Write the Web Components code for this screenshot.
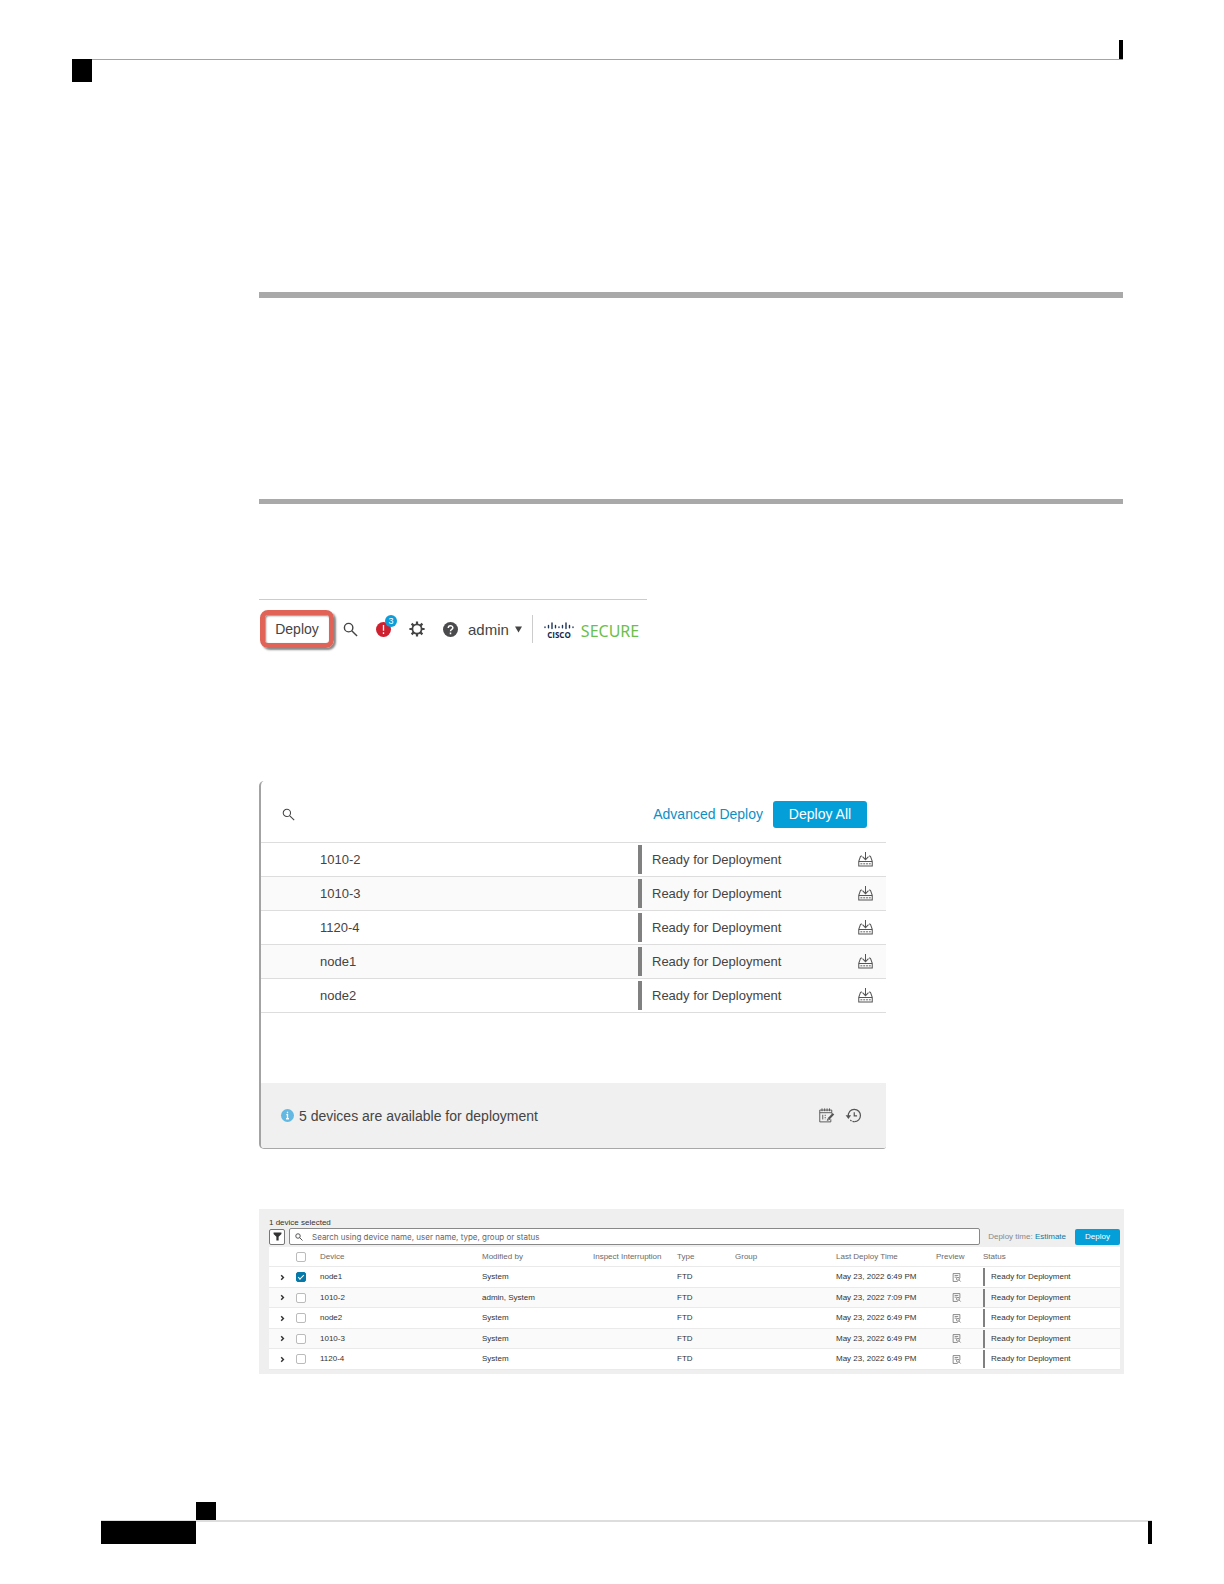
<!DOCTYPE html>
<html lang="en">
<head>
<meta charset="utf-8">
<meta name="viewport" content="width=device-width, initial-scale=1">
<title>Deploy</title>
<style>
  body {
    margin: 0;
    background: #fff;
    color: #444;
    font-family: "Liberation Sans", Arial, sans-serif;
  }
</style>
</head>
<body>
<doc-page>
  <page-head slot="head"></page-head>
  <section-rule></section-rule>
  <section-rule thin></section-rule>
  <deploy-toolbar></deploy-toolbar>
  <deploy-panel></deploy-panel>
  <device-table></device-table>
  <page-foot slot="foot"></page-foot>
</doc-page>

<script>
const ICONS = {
  search: '<circle cx="6" cy="6" r="4.5"/><path d="M9.3 9.3 15 15"/>',
  gear: '<circle cx="8" cy="8" r="4.6" stroke-width="1.8"/><path stroke-width="2.2" d="M8 .4v2.8M8 12.8v2.8M.4 8h2.8M12.8 8h2.8M2.6 2.6l2 2M11.4 11.4l2 2M2.6 13.4l2-2M11.4 4.6l2-2"/>',
  alert: '<circle cx="8" cy="8" r="8" fill="#cf2030" stroke="none"/><path stroke="#fff" stroke-width="1.4" d="M8 3.2v6M8 11v1.8"/>',
  help: '<circle cx="8" cy="8" r="8" fill="#4b4b4d" stroke="none"/><path stroke="#fff" stroke-width="1.6" d="M5.6 6.3C5.6 3.3 10.5 3.3 10.5 6.1 10.5 8 8 7.8 8 9.8M8 11.2v1.8"/>',
  info: '<circle cx="8" cy="8" r="8" fill="#64b8e2" stroke="none"/><path stroke="#fff" stroke-width="1.6" d="M8 3.4v1.8M6.6 7H8v5M6.2 12h3.6"/>',
  caret: '<path fill="currentColor" stroke="none" d="M0 1h16L8 15z"/>',
  deploy: '<path d="M8 0v8M4.8 5 8 8.2 11.2 5M4 4 2.6 5 .8 10v5h14.4v-5l-1.8-5-1.4-1M.8 10.200h14.400"/><path stroke-dasharray="2 1" stroke-width="1" d="M2.600 12.600h11"/>',
  calendar: '<path d="M13.6 6V2.2H.8v12.6h11.8V12M.8 5h12.8M3.2.4v3M6 .4v3M8.6.4v3M11.2.4v3M4 7.2v5"/><path stroke-dasharray="1.4 1" d="M6.6 7.2v5"/><path stroke-width="2.4" d="m15.4 6.2-5 5.2"/><path d="m10.2 10.4-1.4 2.8 2.8-1.2"/>',
  history: '<path d="M2.6 9.2C1.8 4.6 5 1.4 8.8 1.4c4 0 6.6 3.2 6.6 6.6 0 3.6-2.8 6.6-6.4 6.6"/><path stroke-dasharray="2 1.2" d="M9 14.6c-2 0-3.4-.8-4.4-1.8"/><path fill="currentColor" stroke="none" d="M-.4 7.6h5.8l-2.8 4z"/><path d="M8.8 4.4v4h3"/>',
  filter: '<path fill="currentColor" stroke="none" d="M1 1h14v2.4L10 8.6V15H6V8.6L1 3.4z"/>',
  chevron: '<path stroke-width="3.4" d="m5 3 5 5-5 5"/>',
  preview: '<path d="M14 9V1H2v14h8M4.6 4.4h6.6M4.6 7.4h4"/><circle cx="10.6" cy="10.4" r="2.6"/><path d="m12.4 12.2 3 3"/>'
};

class UiIcon extends HTMLElement {
  connectedCallback() {
    const size = this.getAttribute('size') || 16;
    const stroke = this.getAttribute('stroke') || 1.3;
    this.attachShadow({ mode: 'open' });
    this.shadowRoot.innerHTML = `
      <style>
        :host { display: inline-flex; flex: none; }
        svg { display: block; overflow: visible; }
      </style>
      <svg width="${size}" height="${size}" viewBox="0 0 16 16" fill="none" stroke="currentColor" stroke-width="${stroke}" aria-hidden="true">${ICONS[this.getAttribute('name')]}</svg>
    `;
  }
}

class DocPage extends HTMLElement {
  connectedCallback() {
    this.attachShadow({ mode: 'open' });
    this.shadowRoot.innerHTML = `
      <style>
        :host {
          display: flex;
          flex-direction: column;
          box-sizing: border-box;
          min-height: 100vh;
          padding: 40px 72px;
        }
        main { padding: 210px 28px 0 187px; }
        footer { margin-top: auto; padding-left: 29px; }
      </style>
      <header><slot name="head"></slot></header>
      <main><slot></slot></main>
      <footer><slot name="foot"></slot></footer>
    `;
  }
}

class PageHead extends HTMLElement {
  connectedCallback() {
    this.attachShadow({ mode: 'open' });
    this.shadowRoot.innerHTML = `
      <style>
        :host { display: block; padding-right: 29px; }
        .tick { width: 4px; height: 19px; margin-left: auto; background: #000; }
        .row { display: flex; }
        .block { width: 20px; height: 23px; background: #000; }
        .line { flex: 1; height: 1px; background: #a4a4a4; }
      </style>
      <div class="tick"></div>
      <div class="row"><div class="block"></div><div class="line"></div></div>
    `;
  }
}

class PageFoot extends HTMLElement {
  connectedCallback() {
    this.attachShadow({ mode: 'open' });
    this.shadowRoot.innerHTML = `
      <style>
        :host { display: block; }
        .block { width: 20px; height: 18px; margin-left: 95px; background: #000; }
        .line { height: 1px; background: #ddd; }
        .row { display: flex; justify-content: space-between; }
        .bar { width: 95px; height: 23px; background: #000; }
        .rest { flex: 1; height: 1px; background: #ddd; }
        .tick { width: 4px; height: 23px; background: #000; }
      </style>
      <div class="block"></div>
      <div class="line"></div>
      <div class="row"><div class="bar"></div><div class="rest"></div><div class="tick"></div></div>
    `;
  }
}

class SectionRule extends HTMLElement {
  connectedCallback() {
    this.attachShadow({ mode: 'open' });
    this.shadowRoot.innerHTML = `
      <style>
        :host { display: block; height: 6px; margin-right: 1px; background: #a9a9a9; }
        :host([thin]) { height: 5px; margin-top: 201px; }
      </style>
    `;
  }
}

class DeployToolbar extends HTMLElement {
  connectedCallback() {
    this.attachShadow({ mode: 'open' });
    this.shadowRoot.innerHTML = `
      <style>
        :host {
          display: flex;
          align-items: center;
          box-sizing: border-box;
          width: 388px;
          max-width: 100%;
          height: 59px;
          margin-top: 95px;
          border-top: 1px solid #ccc;
        }
        button {
          display: flex;
          align-items: center;
          padding: 0;
          border: 0;
          background: none;
          color: #444;
          font: inherit;
        }
        .deploy {
          justify-content: center;
          box-sizing: border-box;
          width: 74px;
          height: 38px;
          margin: 0 9px 0 1px;
          border: 5px solid #e16256;
          border-radius: 8px;
          font-size: 14px;
          box-shadow: 2px 2px 2px #888, inset 1px 1px 2px #888;
        }
        .icons { display: flex; gap: 18px; }
        .alert { position: relative; }
        .badge {
          position: absolute;
          left: 9px;
          top: -6px;
          width: 12px;
          height: 12px;
          border-radius: 6px;
          background: #0d9ed9;
          color: #fff;
          font-size: 9px;
          line-height: 12px;
          text-align: center;
        }
        .user { gap: 6px; margin-left: 10px; font-size: 15px; }
        .brand {
          display: flex;
          align-items: center;
          height: 28px;
          margin-left: 10px;
          padding-left: 11px;
          border-left: 1px solid #ccc;
        }
        .brand svg { margin-top: 3px; }
        .secure {
          margin: 4px 0 0 7px;
          color: #6abf4b;
          font: 16px/20px "Noto Sans", "Open Sans", sans-serif;
        }
      </style>
      <button class="deploy" type="button">Deploy</button>
      <div class="icons">
        <button type="button" aria-label="Search"><ui-icon name="search" size="15" stroke="1.5"></ui-icon></button>
        <button type="button" class="alert" aria-label="Notifications"><ui-icon name="alert" size="15"></ui-icon><span class="badge">3</span></button>
        <button type="button" aria-label="Settings"><ui-icon name="gear" size="16"></ui-icon></button>
        <button type="button" aria-label="Help"><ui-icon name="help" size="15"></ui-icon></button>
      </div>
      <button class="user" type="button">admin <ui-icon name="caret" size="7"></ui-icon></button>
      <div class="brand">
        <svg width="30" height="18" viewBox="0 0 30 18" role="img" aria-label="Cisco">
          <path stroke="#1d3557" stroke-width="1.4" stroke-linecap="round" d="M1 5v.6M4.5 3.4v2.4M8 1v5.6M11.5 3.4v2.4M15 5v.6M18.5 3.4v2.4M22 1v5.6M25.5 3.4v2.4M29 5v.6"/>
          <text x="15" y="16" text-anchor="middle" fill="#14284b" font-family="Open Sans, sans-serif" font-weight="700" font-size="8">CISCO</text>
        </svg>
        <span class="secure">SECURE</span>
      </div>
    `;
  }
}

class DeployPanel extends HTMLElement {
  connectedCallback() {
    const devices = ['1010-2', '1010-3', '1120-4', 'node1', 'node2'];
    this.attachShadow({ mode: 'open' });
    this.shadowRoot.innerHTML = `
      <style>
        :host {
          display: block;
          box-sizing: border-box;
          width: 627px;
          max-width: 100%;
          margin-top: 123px;
          border-left: 2px solid #a3a3a3;
          border-bottom: 1px solid #a8a8a8;
          border-radius: 5px 3px 3px 5px;
          font-size: 13px;
          overflow: hidden;
        }
        .top {
          display: flex;
          align-items: center;
          height: 61px;
          padding: 5px 19px 0 21px;
          box-sizing: border-box;
        }
        label { display: flex; flex: 1; align-items: center; gap: 8px; }
        input { flex: 1; min-width: 0; border: 0; padding: 4px; outline: 0; font: inherit; background: none; }
        a { margin-right: 10px; color: #0d8fc4; text-decoration: none; font-size: 14px; }
        button { padding: 0; border: 0; background: none; color: #555; font: inherit; }
        .all {
          width: 94px;
          height: 27px;
          border-radius: 3px;
          background: #049fd9;
          color: #fff;
          font-size: 14px;
        }
        table { width: 100%; border-collapse: collapse; table-layout: fixed; border-bottom: 1px solid #ddd; }
        td { height: 33px; padding: 0; border-top: 1px solid #ddd; }
        tr:nth-child(even) { background: #fafafa; }
        .name { padding-left: 59px; }
        .state { width: 220px; }
        .state span {
          display: block;
          border-left: 4px solid #808080;
          padding-left: 10px;
          line-height: 29px;
        }
        .act { width: 28px; }
        .act button { display: flex; }
        .foot {
          display: flex;
          align-items: center;
          box-sizing: border-box;
          height: 65px;
          margin-top: 70px;
          padding: 0 25px 0 20px;
          background: #f0f0f0;
          font-size: 14px;
        }
        .foot p { flex: 1; margin: 0 0 0 5px; }
        .foot button { display: flex; margin-left: 12px; }
      </style>
      <div class="top">
        <label><ui-icon name="search" size="13"></ui-icon><input type="text" aria-label="Search devices"></label>
        <a href="#advanced">Advanced Deploy</a>
        <button class="all" type="button">Deploy All</button>
      </div>
      <table>
        <tbody>
          ${devices.map(name => `
          <tr>
            <td class="name">${name}</td>
            <td class="state"><span>Ready for Deployment</span></td>
            <td class="act"><button type="button" aria-label="Deploy ${name}"><ui-icon name="deploy" size="15" stroke="1.1"></ui-icon></button></td>
          </tr>`).join('')}
        </tbody>
      </table>
      <div class="foot">
        <ui-icon name="info" size="13"></ui-icon>
        <p>5 devices are available for deployment</p>
        <button type="button" aria-label="Notes"><ui-icon name="calendar" size="15" stroke="1"></ui-icon></button>
        <button type="button" aria-label="History"><ui-icon name="history" size="15"></ui-icon></button>
      </div>
    `;
  }
}

class DeviceTable extends HTMLElement {
  connectedCallback() {
    const rows = [
      ['node1', 'System', 'May 23, 2022 6:49 PM', true],
      ['1010-2', 'admin, System', 'May 23, 2022 7:09 PM'],
      ['node2', 'System', 'May 23, 2022 6:49 PM'],
      ['1010-3', 'System', 'May 23, 2022 6:49 PM'],
      ['1120-4', 'System', 'May 23, 2022 6:49 PM']
    ];
    this.attachShadow({ mode: 'open' });
    this.shadowRoot.innerHTML = `
      <style>
        :host {
          display: block;
          margin-top: 60px;
          padding: 9px 4px 4px 10px;
          background: #efefef;
          font-size: 8px;
          line-height: 10px;
        }
        .count { margin: 0; color: #333; }
        .bar { display: flex; align-items: center; gap: 4px; height: 17px; margin-bottom: 2px; }
        button { padding: 0; border: 0; background: none; color: #333; font: inherit; }
        .filter {
          display: flex;
          align-items: center;
          justify-content: center;
          box-sizing: border-box;
          width: 16px;
          height: 16px;
          border: 1px solid #777;
          border-radius: 2px;
          background: #fff;
        }
        label {
          display: flex;
          flex: 1;
          align-items: center;
          gap: 9px;
          box-sizing: border-box;
          height: 17px;
          padding-left: 5px;
          border: 1px solid #888;
          border-radius: 2px;
          background: #fff;
          color: #444;
        }
        label input { flex: 1; min-width: 0; padding: 0; border: 0; outline: 0; background: none; font: 8px Inter, sans-serif; }
        label input::placeholder { color: #666; opacity: 1; }
        .time { margin-left: 4px; color: #888; }
        a { color: #0a7aa6; text-decoration: none; }
        .go { width: 45px; height: 16px; margin-left: 5px; border-radius: 2px; background: #049fd9; color: #fff; }
        table { width: 100%; border-collapse: collapse; table-layout: fixed; background: #fff; }
        th, td { height: 20px; padding: 0; border-bottom: 1px solid #eaeaea; text-align: left; white-space: nowrap; }
        th { height: 19px; color: #6a6a6a; font-weight: 400; }
        td { color: #333; }
        tbody tr:nth-child(even) { background: #fafafa; }
        tbody tr:nth-child(even) td { height: 19px; }
        td:first-child { padding-left: 10px; }
        td button, td ui-icon { display: flex; }
        td.view { padding-left: 16px; color: #666; }
        .state { display: block; border-left: 2px solid #808080; padding-left: 6px; line-height: 18px; }
        input[type=checkbox] {
          appearance: none;
          display: flex;
          align-items: center;
          justify-content: center;
          box-sizing: border-box;
          width: 10px;
          height: 10px;
          margin: 0;
          border: 1px solid #bbb;
          border-radius: 2px;
          background: #fff;
        }
        input[type=checkbox]:checked { border-color: #0679a8; background: #0679a8; }
        input[type=checkbox]:checked::before {
          content: "";
          width: 5px;
          height: 2px;
          margin-bottom: 2px;
          border: solid #fff;
          border-width: 0 0 1px 1px;
          transform: rotate(-45deg);
        }
      </style>
      <p class="count">1 device selected</p>
      <div class="bar">
        <button class="filter" type="button" aria-label="Filter"><ui-icon name="filter" size="9"></ui-icon></button>
        <label><ui-icon name="search" size="8" stroke="1.8"></ui-icon><input type="text" aria-label="Search" placeholder="Search using device name, user name, type, group or status"></label>
        <span class="time">Deploy time: <a href="#estimate">Estimate</a></span>
        <button class="go" type="button">Deploy</button>
      </div>
      <table>
        <colgroup>
          <col style="width:27px"><col style="width:24px"><col style="width:162px">
          <col style="width:111px"><col style="width:84px"><col style="width:58px">
          <col style="width:101px"><col style="width:100px"><col style="width:47px"><col>
        </colgroup>
        <thead>
          <tr>
            <th></th>
            <th><input type="checkbox" aria-label="Select all"></th>
            <th>Device</th><th>Modified by</th><th>Inspect Interruption</th><th>Type</th>
            <th>Group</th><th>Last Deploy Time</th><th>Preview</th><th>Status</th>
          </tr>
        </thead>
        <tbody>
          ${rows.map(([name, by, time, checked]) => `
          <tr>
            <td><button type="button" aria-label="Expand ${name}"><ui-icon name="chevron" size="7"></ui-icon></button></td>
            <td><input type="checkbox" aria-label="Select ${name}" ${checked ? 'checked' : ''}></td>
            <td>${name}</td><td>${by}</td><td></td><td>FTD</td><td></td><td>${time}</td>
            <td class="view"><ui-icon name="preview" size="9"></ui-icon></td>
            <td><span class="state">Ready for Deployment</span></td>
          </tr>`).join('')}
        </tbody>
      </table>
    `;
  }
}

customElements.define('ui-icon', UiIcon);
customElements.define('doc-page', DocPage);
customElements.define('page-head', PageHead);
customElements.define('page-foot', PageFoot);
customElements.define('section-rule', SectionRule);
customElements.define('deploy-toolbar', DeployToolbar);
customElements.define('deploy-panel', DeployPanel);
customElements.define('device-table', DeviceTable);
</script>
</body>
</html>
